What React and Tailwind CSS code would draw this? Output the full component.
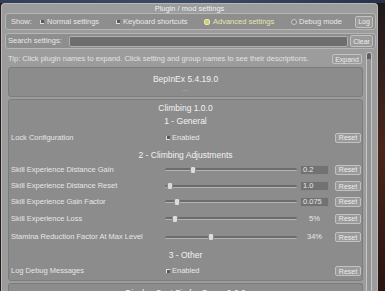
import React from 'react';

const Btn = ({ children, className = '' }) => (
  <div className={`h-[10px] shrink-0 flex items-center justify-center rounded-[2px] border border-[#c2c2c2] bg-[#9a9a9a] text-[7px] leading-none text-[#ececec] ${className}`}>
    {children}
  </div>
);

const Check = () => (
  <span className="w-[6px] h-[6px] shrink-0 flex items-center justify-center bg-[#e0e0e0] border border-[#8a8a8a] rounded-[1px]">
    <span className="w-[3px] h-[3px] bg-[#5a5a5a]" />
  </span>
);

const Slider = ({ pos }) => (
  <div className="relative w-[132px] h-[8px] flex items-center">
    <div className="w-full h-[3px] rounded-full bg-[#6c6c6c] border-b border-[#b4b4b4]" />
    <div
      className="absolute top-0 w-[6px] h-[8px] rounded-[2px] bg-[#dcdcdc] border border-[#8c8c8c]"
      style={{ left: pos - 3 }}
    />
  </div>
);

const Header = ({ text, h }) => (
  <div className={`${h} shrink-0 flex items-center justify-center text-[8.5px] text-[#f2f2f2]`}>{text}</div>
);

const Row = ({ label, h, children }) => (
  <div className={`${h} shrink-0 flex items-center pl-[2px] pr-[1px]`}>
    <div className="w-[154px] text-[7.5px] text-[#e6e6e6] whitespace-nowrap">{label}</div>
    <div className="flex-1 flex items-center">{children}</div>
    <Btn className="w-[26px]">Reset</Btn>
  </div>
);

const SliderRow = ({ label, h, pos, value, boxed = true }) => (
  <Row label={label} h={h}>
    <Slider pos={pos} />
    {boxed ? (
      <div className="ml-[3px] w-[29px] h-[10px] flex items-center pl-[2px] bg-[#727272] border border-[#8a8a8a] rounded-[1px] text-[7.5px] text-[#e8e8e8]">
        {value}
      </div>
    ) : (
      <div className="ml-[3px] w-[29px] text-center text-[7.5px] text-[#e8e8e8]">{value}</div>
    )}
  </Row>
);

const ToggleRow = ({ label, h }) => (
  <Row label={label} h={h}>
    <Check />
    <span className="ml-[1px] text-[7.5px] text-[#e8e8e8]">Enabled</span>
  </Row>
);

export default function App() {
  return (
    <div className="w-[385px] h-[291px] overflow-hidden flex flex-col bg-[#2a1c18] font-['Liberation_Sans',Arial,sans-serif] leading-none">
      <div className="h-[3px] bg-gradient-to-r from-[#2f3f5c] via-[#3b4a66] to-[#26324a] shrink-0" />
      <div className="flex flex-1 min-h-0">
        <div className="w-[377px] ml-[1px] flex flex-col bg-[#9c9c9c] border-x border-t border-[#b8b8b8] rounded-t-[4px]">
          <div className="h-[9px] shrink-0 flex items-center justify-center text-[7.5px] text-[#efefef]">Plugin / mod settings</div>

          <div className="ml-[3px] mr-[1px] h-[17px] shrink-0 flex items-center rounded-[3px] border border-[#b6b6b6] bg-[#8e8e8e] text-[7.5px] text-[#e8e8e8]">
            <span className="ml-[5px] w-[28px]">Show:</span>
            <Check />
            <span className="ml-[2px] w-[68px]">Normal settings</span>
            <Check />
            <span className="ml-[2px] w-[81px]">Keyboard shortcuts</span>
            <span className="w-[6px] h-[6px] shrink-0 rounded-[2px] bg-[#cfcf6e] border border-[#e8e8b0]" />
            <span className="ml-[3px] w-[78px] text-[#e6e6a8]">Advanced settings</span>
            <span className="w-[6px] h-[6px] shrink-0 rounded-full bg-[#858585] border border-[#c8c8c8]" />
            <span className="ml-[2px]">Debug mode</span>
            <Btn className="ml-auto mr-[2px] w-[18px] h-[12px]">Log</Btn>
          </div>

          <div className="ml-[3px] mr-[1px] mt-[3px] h-[16px] shrink-0 flex items-center rounded-[3px] border border-[#b6b6b6] bg-[#8e8e8e] text-[7.5px] text-[#e8e8e8]">
            <span className="ml-[2px] w-[61px]">Search settings:</span>
            <div className="w-[279px] h-[11px] rounded-[2px] bg-[#6e6e6e] border border-[#b0b0b0]" />
            <Btn className="ml-auto mr-[2px] w-[23px] h-[12px]">Clear</Btn>
          </div>

          <div className="flex flex-1 min-h-0 ml-[3px] mt-[3px] gap-[3px]">
            <div className="w-[358px] flex flex-col">
              <div className="h-[14px] shrink-0 flex items-center pl-[3px] pr-[1px]">
                <span className="text-[7.5px] text-[#e2e2e2] whitespace-nowrap">
                  Tip: Click plugin names to expand. Click setting and group names to see their descriptions.
                </span>
                <Btn className="ml-auto w-[30px]">Expand</Btn>
              </div>

              <div className="ml-[3px] mt-[1px] h-[30px] shrink-0 flex flex-col rounded-[3px] border border-[#7c7c7c] bg-[#8c8c8c]">
                <div className="mt-[5px] h-[12px] shrink-0 flex items-center justify-center text-[8.5px] text-[#f0f0f0]">BepInEx 5.4.19.0</div>
                <div className="h-[7px] shrink-0 flex items-center justify-center text-[6px] text-[#dadada]">...</div>
              </div>

              <div className="ml-[3px] mt-[2px] shrink-0 flex flex-col rounded-[3px] border border-[#7c7c7c] bg-[#8c8c8c] pb-[3px]">
                <Header text="Climbing 1.0.0" h="h-[17px]" />
                <Header text="1 - General" h="h-[9px]" />
                <ToggleRow label="Lock Configuration" h="h-[23px]" />
                <Header text="2 - Climbing Adjustments" h="h-[12px]" />
                <SliderRow label="Skill Experience Distance Gain" h="h-[17px]" pos={28} value="0.2" />
                <SliderRow label="Skill Experience Distance Reset" h="h-[16px]" pos={5} value="1.0" />
                <SliderRow label="Skill Experience Gain Factor" h="h-[15px]" pos={12} value="0.075" />
                <SliderRow label="Skill Experience Loss" h="h-[19px]" pos={10} value="5%" boxed={false} />
                <SliderRow label="Stamina Reduction Factor At Max Level" h="h-[18px]" pos={46} value="34%" boxed={false} />
                <Header text="3 - Other" h="h-[19px]" />
                <ToggleRow label="Log Debug Messages" h="h-[12px]" />
              </div>

              <div className="ml-[3px] mt-[2px] h-[20px] shrink-0 flex justify-center pt-[5px] rounded-t-[3px] border-x border-t border-[#7c7c7c] bg-[#8c8c8c] text-[8.5px] text-[#f0f0f0]">
                Display Cost Fix for Game 0.0.0
              </div>
            </div>

            <div className="w-[6px] flex flex-col rounded-t-[3px] border-x border-t border-[#c6c6c6] bg-[#939393]">
              <div className="h-[6px] shrink-0 rounded-t-[3px] bg-[#5e5e5e]" />
            </div>
          </div>
        </div>
        <div className="flex-1 bg-gradient-to-b from-[#1e1a1c] via-[#4a2418] to-[#2a1410]" />
      </div>
    </div>
  );
}
